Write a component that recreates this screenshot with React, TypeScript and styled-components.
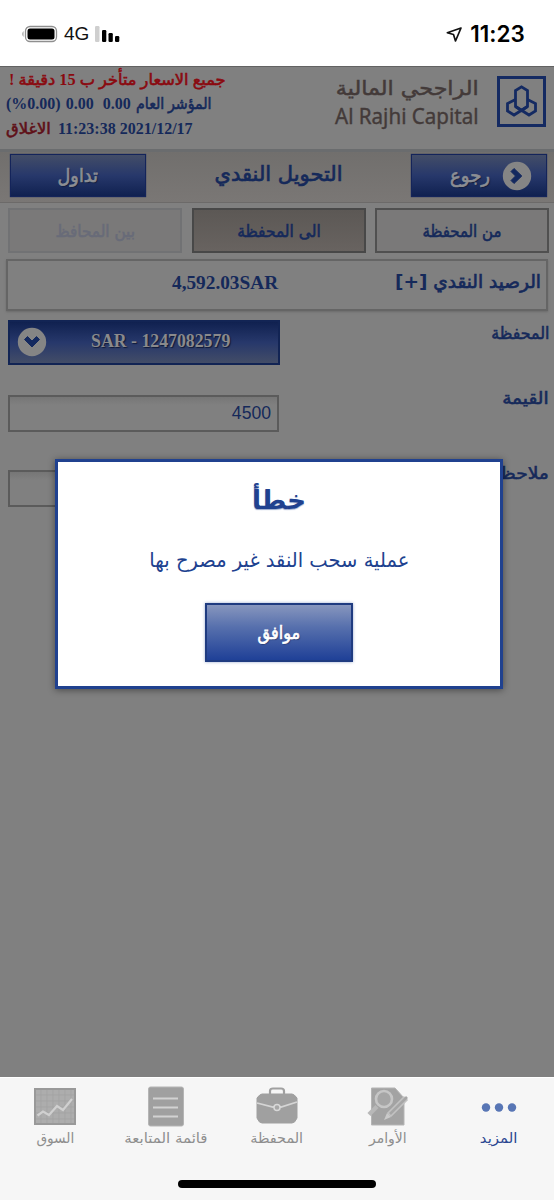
import React from "react";
import styled, { createGlobalStyle } from "styled-components";

const navy = "#15295a";
const arabic = `"DejaVu Sans", sans-serif`;
const serif = `"Liberation Serif", "DejaVu Sans", serif`;

const Global = createGlobalStyle`
  * { box-sizing: border-box; }
  body { margin: 0; background: #808080; font-family: ${arabic}; }
  button, input { font: inherit; margin: 0; padding: 0; border-radius: 0; }
`;

const Screen = styled.div`
  width: 554px;
  height: 1200px;
  position: relative;
  display: flex;
  flex-direction: column;
  overflow: hidden;
  background: #808080;
`;

/* A line of text: $w stretches or condenses the face, $heavy thickens a regular weight. */
const Text = styled.span<{
  $size: number;
  $color?: string;
  $bold?: boolean;
  $heavy?: number;
  $w?: number;
  $family?: string;
  $origin?: string;
  $margin?: string;
}>`
  display: block;
  white-space: nowrap;
  font-size: ${(p) => p.$size}px;
  line-height: 1.2;
  color: ${(p) => p.$color ?? navy};
  font-weight: ${(p) => (p.$bold ? 700 : 400)};
  font-family: ${(p) => p.$family ?? arabic};
  -webkit-text-stroke: ${(p) => p.$heavy ?? 0}px currentColor;
  margin: ${(p) => p.$margin ?? 0};
  transform: scaleX(${(p) => p.$w ?? 1});
  transform-origin: ${(p) => p.$origin ?? "center"};
`;
const Strong = styled.b`
  -webkit-text-stroke: 0;
`;

const StatusBar = styled.div`
  height: 66px;
  flex: none;
  background: #fff;
  display: flex;
  justify-content: space-between;
  padding: 2px 29px 0 21px;
  align-items: center;
`;
const StatusGroup = styled.div`
  display: flex;
  align-items: center;
`;
const Network = styled.span`
  font: 400 19px/24px "Liberation Sans", sans-serif;
  color: #111;
  margin: 0 5px 0 6px;
`;
const Clock = styled.span`
  font: 600 22.5px/28px Inter, sans-serif;
  color: #000;
  letter-spacing: 0.05px;
  margin-left: 7px;
`;

const Header = styled.header`
  height: 83px;
  flex: none;
  border-top: 1px solid #626262;
  display: flex;
  justify-content: space-between;
  padding: 0 8px 0 6px;
`;
const Ticker = styled.div`
  display: flex;
  flex-direction: column;
  align-items: flex-start;
`;
const TickerLine = styled.div`
  height: 24.6px;
  display: flex;
  align-items: center;
  direction: rtl;
  gap: 5px;
`;
const Brand = styled.div`
  display: flex;
  gap: 18px;
  padding-top: 9px;
`;
const BrandName = styled.div`
  display: flex;
  flex-direction: column;
  align-items: flex-end;
`;

const Toolbar = styled.div`
  height: 54px;
  flex: none;
  border-top: 3px solid #6a6c6e;
  border-bottom: 1px solid #6c6a69;
  background: linear-gradient(#716f6d, #7a7775);
  display: flex;
  justify-content: space-between;
  padding: 2px 7px 0 10px;
`;
const BlueButton = styled.button<{ $end?: boolean }>`
  width: 136px;
  height: 43px;
  border: 1px solid #14245a;
  background: linear-gradient(#434d67, #27386b 50%, #102150);
  box-shadow: 0 0 1px #14245a;
  display: flex;
  align-items: center;
  justify-content: ${(p) => (p.$end ? "flex-end" : "center")};
  gap: 12px;
  padding-right: ${(p) => (p.$end ? 14 : 0)}px;
  text-shadow: 1px 1px 1px #101a38;
`;
const Title = styled.h1`
  margin: 0;
  padding-top: 8px;
`;

const Tabs = styled.div`
  flex: none;
  display: flex;
  justify-content: space-between;
  padding: 5px 5px 0 8px;
`;
const Tab = styled.button<{ $kind?: "active" | "disabled" }>`
  width: 174px;
  height: 45px;
  display: flex;
  align-items: center;
  justify-content: center;
  padding-top: 2px;
  border: 2px solid ${(p) => (p.$kind === "disabled" ? "#717274" : p.$kind ? "#484848" : "#505050")};
  background: ${(p) => (p.$kind === "active" ? "linear-gradient(#5c5855, #686360)" : "#7a7979")};
`;

const Balance = styled.div`
  height: 52px;
  flex: none;
  margin: 6px 6px 0;
  border: 2px solid #656565;
  box-shadow: 0 1px 2px #6a6a6a;
  display: flex;
  justify-content: space-between;
  padding: 10px 5px 0 164px;
`;

const Form = styled.div`
  flex: 1;
  padding: 9px 5px 0 8px;
`;
const Field = styled.div<{ $height: number }>`
  height: ${(p) => p.$height}px;
  display: flex;
  justify-content: space-between;
  align-items: flex-start;
`;
const FieldLabel = styled.label<{ $top: number }>`
  margin-top: ${(p) => p.$top}px;
`;
const Select = styled.button`
  width: 272px;
  height: 45px;
  border: 2px solid #122454;
  background: linear-gradient(#102150, #27386b 50%, #434d67);
  display: flex;
  align-items: center;
  gap: 44px;
  padding: 0 0 2px 7px;
  text-shadow: 1px 1px 1px #101a38;
`;
const Input = styled.input`
  width: 271px;
  height: 37px;
  border: 2px solid #5b5b5b;
  border-radius: 0;
  background: linear-gradient(#767676, #808080 8px);
  font: 400 17.6px/30px "Liberation Sans", sans-serif;
  color: ${navy};
  text-align: right;
  padding: 0 6px 0 0;
  outline: none;
`;

const Dialog = styled.div`
  position: absolute;
  left: 55px;
  top: 459px;
  width: 448px;
  height: 230px;
  border: 3px solid #20418f;
  background: #fff;
  box-shadow: 0 1px 7px rgba(0, 0, 0, 0.45);
  display: flex;
  flex-direction: column;
  align-items: center;
`;
const DialogTitle = styled.h2`
  margin: 23px 0 0;
  height: 60px;
  text-shadow: 0 1px 1px #9aa9cd;
`;
const DialogBody = styled.div`
  height: 58px;
  padding-top: 3px;
`;
const Confirm = styled.button`
  width: 148px;
  height: 59px;
  border: 2px solid #1f3b80;
  background: linear-gradient(#8796be, #5770ad 40%, #1f4097);
  box-shadow: 0 0 3px #9aa9cd;
  text-shadow: 1px 1px 1px #24386e;
  display: flex;
  align-items: center;
  justify-content: center;
`;

const TabBar = styled.nav`
  height: 123px;
  flex: none;
  background: #f6f6f6;
  border-top: 1px solid #fff;
  display: grid;
  grid-template-columns: repeat(5, 110.8px);
  grid-template-rows: 102px 8px;
`;
const NavItem = styled.a`
  display: flex;
  flex-direction: column;
  align-items: center;
  padding-top: 6px;
  gap: 2px;
`;
const HomeBar = styled.div`
  grid-column: 1 / -1;
  justify-self: center;
  width: 198px;
  height: 8px;
  border-radius: 4px;
  background: #000;
`;

const Battery = () => (
  <svg width="37" height="18" viewBox="0 0 37 18">
    <path d="M2.500 6Q0 9 2.500 12z" fill="#999" />
    <rect x="4.500" y="1.500" width="31" height="15" rx="4.500" fill="none" stroke="#8f8f8f" strokeWidth="1.300" />
    <rect x="6.500" y="3.500" width="27" height="11" rx="2.500" fill="#000" />
  </svg>
);
const Signal = () => (
  <svg width="27" height="17" viewBox="0 0 27 17">
    <rect x="1" y="0" width="4.500" height="16" rx="1.200" fill="#cfcfcf" />
    <rect x="8" y="4" width="4.300" height="12" rx="1.200" />
    <rect x="14.500" y="7" width="4.300" height="9" rx="1.200" />
    <rect x="21" y="10" width="4.300" height="6" rx="1.200" />
  </svg>
);
const LocationArrow = () => (
  <svg width="17" height="17" viewBox="0 0 17 17" fill="none" stroke="#111" strokeWidth="1.700" strokeLinejoin="round">
    <path d="M15 2 1.300 6.800 7.500 8.500 9.500 15z" />
  </svg>
);
const Logo = () => (
  <svg width="49" height="51" viewBox="0 0 49 51" fill="none" stroke="#142a62">
    <rect x="1.500" y="1.500" width="46" height="48" strokeWidth="3" />
    <g strokeWidth="2.800">
      <path d="M18.500 30.500V14.500L24.500 10.800 30.500 14.500V30.500L24.500 34.500z" />
      <path d="M18.500 23.500 10.500 27.500V35L17 39 30.500 30.500" />
      <path d="M30.500 23.500 38.500 27.500V35L32 39 18.500 30.500" />
    </g>
  </svg>
);
const RoundChevron = ({ down }: { down?: boolean }) => (
  <svg width="30" height="30" viewBox="0 0 30 30">
    <circle cx="15" cy="15" r="14.200" fill="#858585" />
    <path
      d={down ? "M7.500 12.500 10.500 9.500 15 14 19.500 9.500 22.500 12.500 15 20z" : "M12 7.500 9 10.500 13.500 15 9 19.500 12 22.500 19.800 15z"}
      fill="#14295f"
      stroke="#14295f"
      strokeLinejoin="round"
    />
  </svg>
);

const MarketIcon = () => (
  <svg width="42" height="44" viewBox="0 0 42 44">
    <rect x="1" y="5" width="40" height="35" fill="#adadad" stroke="#999" strokeWidth="2" />
    <path d="M2 11H40M2 17H40M2 23H40M2 29H40M2 35H40M7 6V39M13 6V39M19 6V39M25 6V39M31 6V39M37 6V39" stroke="#a2a2a2" strokeWidth=".8" />
    <path d="M3.500 31.500 9 27.500 15 31 23 22 29 26 38 15" fill="none" stroke="#d0d0d0" strokeWidth="2.200" />
  </svg>
);
const WatchIcon = () => (
  <svg width="36" height="44" viewBox="0 0 36 44">
    <rect x=".5" y="3" width="35" height="39" rx="2" fill="#a0a0a0" stroke="#b5b5b5" />
    <path d="M5 14.500H30M5 23.500H30M5 32.500H30" stroke="#d2d2d2" strokeWidth="2" />
  </svg>
);
const CaseIcon = () => (
  <svg width="42" height="44" viewBox="0 0 42 44">
    <path d="M14 10V7Q14 4.500 17 4.500H25Q28 4.500 28 7V10" fill="none" stroke="#a0a0a0" strokeWidth="2.200" />
    <path d="M6 10H36Q38 10 41 14V34Q39 39 36 39H6Q3 39 1 34V14Q4 10 6 10z" fill="#a0a0a0" stroke="#a0a0a0" strokeLinejoin="round" />
    <path d="M1 19 17 23H25L41 18" fill="none" stroke="#d5d5d5" strokeWidth="1.800" />
    <circle cx="21" cy="23.500" r="3" fill="#a7a7a7" stroke="#d8d8d8" strokeWidth="1.500" />
  </svg>
);
const OrdersIcon = () => (
  <svg width="42" height="44" viewBox="0 0 42 44">
    <path d="M4.500 4H28L37 14V41H4.500z" fill="#a3a3a3" stroke="#b5b5b5" />
    <path d="M2 30.500 10 22.500" stroke="#b8b8b8" strokeWidth="4.500" />
    <circle cx="17" cy="15" r="8" fill="#a6a6a6" stroke="#c6c6c6" strokeWidth="2.600" />
    <path d="M39 14 22 31" stroke="#c2c2c2" strokeWidth="6" />
    <path d="M40 13 23 30" stroke="#a6a6a6" strokeWidth="2.600" />
    <path d="M20 29 24 33 17 36z" fill="#cacaca" />
  </svg>
);
const MoreIcon = () => (
  <svg width="42" height="44" viewBox="0 0 42 44" fill="#5876b5">
    <circle cx="8" cy="23.500" r="4.200" />
    <circle cx="21" cy="23.500" r="4.200" />
    <circle cx="34" cy="23.500" r="4.200" />
  </svg>
);

const items = [
  { label: "السوق", Icon: MarketIcon, w: 0.98 },
  { label: "قائمة المتابعة", Icon: WatchIcon, w: 1.07 },
  { label: "المحفظة", Icon: CaseIcon, w: 1.03 },
  { label: "الأوامر", Icon: OrdersIcon, w: 1 },
  { label: "المزيد", Icon: MoreIcon, w: 1.07, active: true },
];

export default function App() {
  return (
    <Screen>
      <Global />
      <StatusBar>
        <StatusGroup>
          <Battery />
          <Network>4G</Network>
          <Signal />
        </StatusGroup>
        <StatusGroup>
          <LocationArrow />
          <Clock>11:23</Clock>
        </StatusGroup>
      </StatusBar>

      <Header>
        <Ticker>
          <TickerLine>
            <Text $size={16} $heavy={0.6} $w={1.015} $family={serif} $color="#8a0a10" $origin="left" $margin="0 0 0 3px">
              جميع الاسعار متأخر ب <Strong>15</Strong> دقيقة <Strong>!</Strong>
            </Text>
          </TickerLine>
          <TickerLine>
            <Text $size={16} $heavy={0.6} $w={0.89} $family={serif} $origin="left">المؤشر العام</Text>
            <Text $size={16} $bold $family={serif} $margin="0 0 0 4px">0.00</Text>
            <Text $size={16} $bold $family={serif}>0.00</Text>
            <Text $size={16} $bold $family={serif} dir="ltr">(%0.00)</Text>
          </TickerLine>
          <TickerLine>
            <Text $size={16} $bold $family={serif} $margin="0 0 0 3px" dir="ltr">11:23:38 2021/12/17</Text>
            <Text $size={16} $heavy={0.6} $w={1.02} $color="#5f1018" $origin="left">الاغلاق</Text>
          </TickerLine>
        </Ticker>
        <Brand>
          <BrandName>
            <Text $size={20} $heavy={0.5} $w={1.11} $color="#433a39" $origin="right">الراجحي المالية</Text>
            <Text $size={22} $heavy={0.4} $w={0.935} $color="#433a39" $family={`"Noto Sans", sans-serif`} $origin="right" $margin="2px 0 0">
              Al Rajhi Capital
            </Text>
          </BrandName>
          <Logo />
        </Brand>
      </Header>

      <Toolbar>
        <BlueButton>
          <Text $size={19} $heavy={0.7} $w={0.93} $color="#8c8e94">تداول</Text>
        </BlueButton>
        <Title>
          <Text $size={21} $heavy={0.7}>التحويل النقدي</Text>
        </Title>
        <BlueButton $end>
          <Text $size={19} $heavy={0.7} $w={0.95} $color="#8c8e94" $origin="right">رجوع</Text>
          <RoundChevron />
        </BlueButton>
      </Toolbar>

      <Tabs>
        <Tab $kind="disabled">
          <Text $size={17} $heavy={0.6} $w={0.9} $color="#686b78">بين المحافظ</Text>
        </Tab>
        <Tab $kind="active">
          <Text $size={17} $heavy={0.6} $w={0.91}>الى المحفظة</Text>
        </Tab>
        <Tab>
          <Text $size={17} $heavy={0.6} $w={0.88}>من المحفظة</Text>
        </Tab>
      </Tabs>

      <Balance>
        <Text $size={19.3} $bold $family={serif}>4,592.03SAR</Text>
        <Text $size={18.5} $heavy={0.7} dir="rtl" $origin="right">الرصيد النقدي <Strong>[+]</Strong></Text>
      </Balance>

      <Form>
        <Field $height={75}>
          <Select>
            <RoundChevron down />
            <Text $size={17.8} $bold $family={serif} $color="#8a8a8c">SAR - 1247082579</Text>
          </Select>
          <FieldLabel $top={3}>
            <Text $size={17} $heavy={0.6} $w={0.93} $origin="right">المحفظة</Text>
          </FieldLabel>
        </Field>
        <Field $height={75}>
          <Input defaultValue="4500" />
          <FieldLabel $top={-7}>
            <Text $size={17} $heavy={0.6} $w={1.09} $origin="right">القيمة</Text>
          </FieldLabel>
        </Field>
        <Field $height={60}>
          <Input />
          <FieldLabel $top={-7}>
            <Text $size={17} $heavy={0.6} $w={1.1} $origin="right">ملاحظات</Text>
          </FieldLabel>
        </Field>
      </Form>

      <TabBar>
        {items.map(({ label, Icon, w, active }) => (
          <NavItem key={label}>
            <Icon />
            <Text $size={14} $w={w} $color={active ? "#2b4691" : "#8e8e8e"}>{label}</Text>
          </NavItem>
        ))}
        <HomeBar />
      </TabBar>

      <Dialog role="alertdialog">
        <DialogTitle>
          <Text $size={26} $bold $color="#20418f">خطأ</Text>
        </DialogTitle>
        <DialogBody>
          <Text $size={20} $w={0.975} $color="#20418f">عملية سحب النقد غير مصرح بها</Text>
        </DialogBody>
        <Confirm>
          <Text $size={18} $heavy={0.7} $w={0.9} $color="#fff">موافق</Text>
        </Confirm>
      </Dialog>
    </Screen>
  );
}
